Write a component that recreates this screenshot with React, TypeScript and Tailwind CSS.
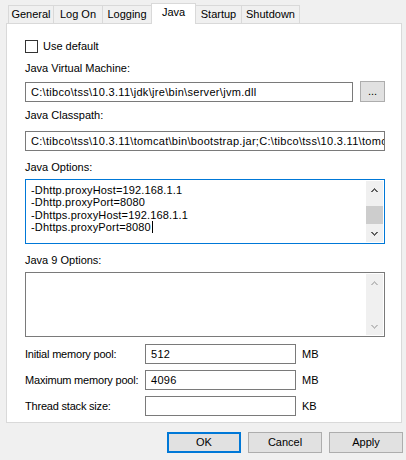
import React from "react";

const FONT = "font-['Liberation_Sans',Arial,sans-serif]";

type Dir = "up" | "down";

// 7x4 pixel chevron used by the classic scrollbar buttons
function Chevron({ dir, color }: { dir: Dir; color: string }) {
  const rows = [[3], [2, 3, 4], [1, 2, 4, 5], [0, 1, 5, 6]];
  const ordered = dir === "up" ? rows : [...rows].reverse();
  return (
    <svg width="7" height="4" viewBox="0 0 7 4" shapeRendering="crispEdges">
      {ordered.flatMap((xs, y) =>
        xs.map((x) => <rect key={`${x}-${y}`} x={x} y={y} width="1" height="1" fill={color} />)
      )}
    </svg>
  );
}

function ScrollBar({ enabled }: { enabled: boolean }) {
  const color = enabled ? "#606060" : "#bfbfbf";
  return (
    <div className="my-[1px] mr-[1px] flex w-[17px] flex-col bg-[#f0f0f0]">
      <div className="flex h-[17px] items-center justify-center">
        <Chevron dir="up" color={color} />
      </div>
      <div className="flex flex-1 flex-col justify-end pb-[1px]">
        {enabled && <div className="h-[18px] w-full bg-[#cdcdcd]" />}
      </div>
      <div className="flex h-[17px] items-center justify-center">
        <Chevron dir="down" color={color} />
      </div>
    </div>
  );
}

function Label({ children, className = "" }: { children: React.ReactNode; className?: string }) {
  return <div className={`h-[15px] text-[11px] leading-[15px] text-black ${className}`}>{children}</div>;
}

function TextBox({ value, className = "" }: { value?: string; className?: string }) {
  return (
    <div
      className={`h-[20px] overflow-hidden whitespace-nowrap border border-[#7a7a7a] bg-white pl-[5px] text-[11px] leading-[18px] tracking-[0.3px] text-black ${className}`}
    >
      {value}
    </div>
  );
}

type Tab = { name: string; w: string; selected?: boolean; edge: string };

const tabs: Tab[] = [
  { name: "General", w: "w-[45px]", edge: "border-l" },
  { name: "Log On", w: "w-[49px]", edge: "border-l" },
  { name: "Logging", w: "w-[49px]", edge: "border-l" },
  { name: "Java", w: "w-[45px]", edge: "border-x", selected: true },
  { name: "Startup", w: "w-[45px]", edge: "" },
  { name: "Shutdown", w: "w-[59px]", edge: "border-x" },
];

const javaOptions = [
  "-Dhttp.proxyHost=192.168.1.1",
  "-Dhttp.proxyPort=8080",
  "-Dhttps.proxyHost=192.168.1.1",
  "-Dhttps.proxyPort=8080",
];

const memoryRows = [
  { label: "Initial memory pool:", value: "512", unit: "MB" },
  { label: "Maximum memory pool:", value: "4096", unit: "MB" },
  { label: "Thread stack size:", value: "", unit: "KB" },
];

export default function App() {
  return (
    <div className={`${FONT} h-[460px] w-[406px] bg-[#f0f0f0] pt-[3px] text-black`}>
      {/* tab strip */}
      <div className="flex h-[20px] items-end pl-[8px]">
        {tabs.map((t) =>
          t.selected ? (
            <div
              key={t.name}
              className={`relative z-10 mb-[-1px] h-[21px] ${t.w} ${t.edge} border-t border-[#d9d9d9] bg-white text-center text-[11px] leading-[17px]`}
            >
              {t.name}
            </div>
          ) : (
            <div
              key={t.name}
              className={`h-[18px] ${t.w} ${t.edge} border-t border-[#d9d9d9] bg-[#f0f0f0] text-center text-[11px] leading-[17px]`}
            >
              {t.name}
            </div>
          )
        )}
      </div>

      {/* tab page */}
      <div className="ml-[6px] h-[400px] w-[396px] border border-[#d9d9d9] bg-white pl-[18px] pr-[15px] pt-[16px]">
        <div className="flex h-[13px] items-center">
          <div className="h-[13px] w-[13px] border border-[#333333] bg-white" />
          <span className="ml-[5px] text-[11px] leading-[13px]">Use default</span>
        </div>

        <Label className="mt-[8px]">Java Virtual Machine:</Label>
        <div className="mt-[5px] flex h-[21px] items-center gap-[7px]">
          <TextBox className="w-[328px]" value={"C:\\tibco\\tss\\10.3.11\\jdk\\jre\\bin\\server\\jvm.dll"} />
          <div className="flex h-[21px] w-[25px] items-center justify-center border border-[#adadad] bg-[#e1e1e1] text-[11px] leading-[15px]">
            ...
          </div>
        </div>

        <Label className="mt-[6px]">Java Classpath:</Label>
        <TextBox
          className="mt-[8px] w-[360px]"
          value={
            "C:\\tibco\\tss\\10.3.11\\tomcat\\bin\\bootstrap.jar;C:\\tibco\\tss\\10.3.11\\tomcat\\bin\\tomcat-juli.jar"
          }
        />

        <Label className="mt-[9px]">Java Options:</Label>
        <div className="mt-[4px] flex h-[65px] w-[360px] border border-[#0078d7] bg-white">
          <div className="flex-1 pl-[5px] pt-[4px] text-[11px] leading-[12.4px] tracking-[0.15px]">
            {javaOptions.map((line, i) => (
              <div key={line} className="whitespace-nowrap">
                {line}
                {i === javaOptions.length - 1 && (
                  <span className="ml-[1px] inline-block h-[12px] w-px bg-black align-[-2px]" />
                )}
              </div>
            ))}
          </div>
          <ScrollBar enabled />
        </div>

        <Label className="mt-[9px]">Java 9 Options:</Label>
        <div className="mt-[4px] flex h-[65px] w-[360px] border border-[#7a7a7a] bg-white">
          <div className="flex-1" />
          <ScrollBar enabled={false} />
        </div>

        <div className="mt-[7px] flex flex-col gap-[6px]">
          {memoryRows.map((r) => (
            <div key={r.label} className="flex h-[20px] items-center">
              <div className="w-[120px] text-[11px] leading-[15px] tracking-[-0.2px]">{r.label}</div>
              <TextBox className="w-[151px]" value={r.value} />
              <div className="ml-[6px] text-[11px] leading-[15px]">{r.unit}</div>
            </div>
          ))}
        </div>
      </div>

      {/* dialog buttons */}
      <div className="mt-[9px] flex justify-end gap-[7px] pr-[3px]">
        <button className="flex h-[21px] w-[74px] items-center justify-center border-2 border-[#0078d7] bg-[#e1e1e1] text-[11px] text-black">
          OK
        </button>
        <button className="flex h-[21px] w-[74px] items-center justify-center border border-[#adadad] bg-[#e1e1e1] text-[11px] text-black">
          Cancel
        </button>
        <button className="flex h-[21px] w-[74px] items-center justify-center border border-[#adadad] bg-[#e1e1e1] text-[11px] text-black">
          Apply
        </button>
      </div>
    </div>
  );
}
